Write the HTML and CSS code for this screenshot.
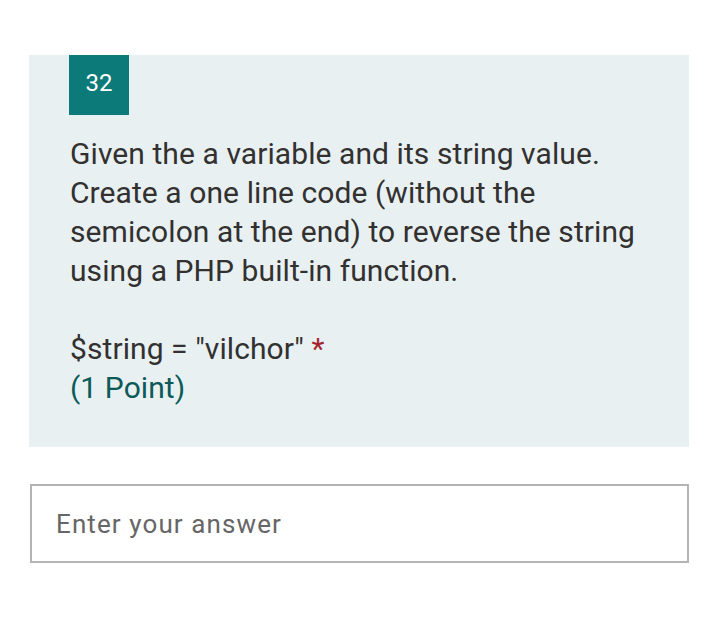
FILE: index.html
```html
<!DOCTYPE html>
<html>
<head>
<meta charset="utf-8">
<link rel="stylesheet" href="styles.css">
</head>
<body>
<div class="page">
  <section class="question">
    <div class="badge">32</div>
    <div class="body">
      <p class="text">Given the a variable and its string value. Create a one line code (without the semicolon at the end) to reverse the string using a PHP built-in function.</p>
      <p class="text code">$string = "vilchor" <span class="req">*</span></p>
      <p class="points">(1 Point)</p>
    </div>
  </section>
  <div class="answer">Enter your answer</div>
</div>
</body>
</html>
```
FILE: styles.css
```css
html, body {
  margin: 0;
  padding: 0;
  background: #ffffff;
}
body {
  font-family: Roboto, "Liberation Sans", sans-serif;
}
.page {
  padding: 55px 25px 0 29px;
  display: flex;
  flex-direction: column;
  gap: 37px;
}
.question {
  background: #e8f0f2;
  padding: 0 40px 40px 40px;
}
.badge {
  width: 60px;
  height: 56px;
  padding-bottom: 4px;
  background: #0b7a78;
  color: #ffffff;
  font-size: 24px;
  display: flex;
  align-items: center;
  justify-content: center;
}
.body {
  padding-top: 19px;
  padding-left: 1px;
}
.text {
  margin: 0;
  font-size: 30px;
  letter-spacing: 0.08px;
  line-height: 39px;
  color: #323130;
}
.code {
  margin-top: 39px;
}
.req {
  color: #a4262c;
}
.points {
  margin: 0;
  font-size: 30px;
  letter-spacing: 0.08px;
  line-height: 39px;
  color: #0b5a58;
}
.answer {
  margin-left: 1px;
  height: 75px;
  border: 2px solid #b4b4b4;
  padding-left: 24px;
  display: flex;
  align-items: center;
  font-size: 26px;
  letter-spacing: 1.1px;
  color: #666666;
}
```
